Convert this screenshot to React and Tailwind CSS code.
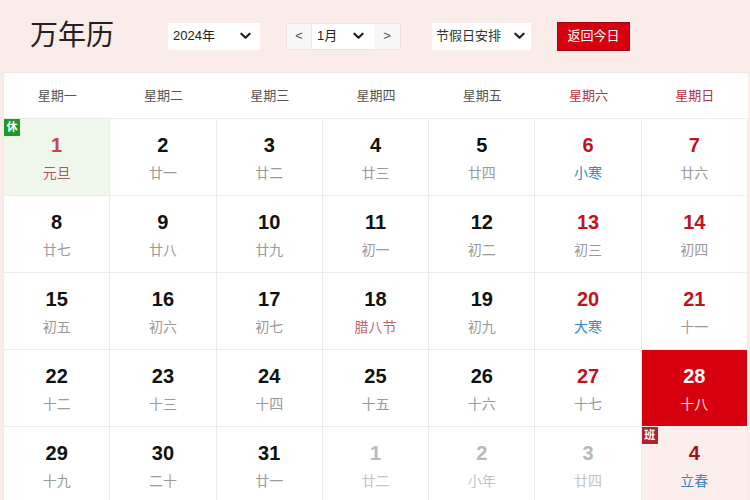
import React from "react";

const CJK = { fontFamily: '"Liberation Sans", "Noto Sans CJK SC", sans-serif' };

function Chev({ className = "" }) {
  return (
    <svg viewBox="0 0 12 8" className={className} width="11" height="8">
      <path d="M1.5 1.5 L6 6 L10.5 1.5" fill="none" stroke="#222" strokeWidth="2.4" strokeLinecap="round" strokeLinejoin="round" />
    </svg>
  );
}

const weekdays = ["星期一", "星期二", "星期三", "星期四", "星期五", "星期六", "星期日"];

const days = [
  { d: "1", l: "元旦", kind: "holiday" },
  { d: "2", l: "廿一" },
  { d: "3", l: "廿二" },
  { d: "4", l: "廿三" },
  { d: "5", l: "廿四" },
  { d: "6", l: "小寒", term: true },
  { d: "7", l: "廿六" },
  { d: "8", l: "廿七" },
  { d: "9", l: "廿八" },
  { d: "10", l: "廿九" },
  { d: "11", l: "初一" },
  { d: "12", l: "初二" },
  { d: "13", l: "初三" },
  { d: "14", l: "初四" },
  { d: "15", l: "初五" },
  { d: "16", l: "初六" },
  { d: "17", l: "初七" },
  { d: "18", l: "腊八节", fest: true },
  { d: "19", l: "初九" },
  { d: "20", l: "大寒", term: true },
  { d: "21", l: "十一" },
  { d: "22", l: "十二" },
  { d: "23", l: "十三" },
  { d: "24", l: "十四" },
  { d: "25", l: "十五" },
  { d: "26", l: "十六" },
  { d: "27", l: "十七" },
  { d: "28", l: "十八", kind: "today" },
  { d: "29", l: "十九" },
  { d: "30", l: "二十" },
  { d: "31", l: "廿一" },
  { d: "1", l: "廿二", other: true },
  { d: "2", l: "小年", other: true },
  { d: "3", l: "廿四", other: true },
  { d: "4", l: "立春", kind: "work", term: true },
];

function Cell({ item, col }) {
  const weekend = col >= 5;
  let bg = "bg-white";
  let numColor = weekend ? "text-[#c0131d]" : "text-[#111]";
  let lunarColor = "text-[#9a9a9a]";
  if (item.other) {
    numColor = "text-[#b9b9b9]";
    lunarColor = "text-[#c4c4c4]";
  }
  if (item.term) lunarColor = "text-[#3a88c0]";
  if (item.fest) lunarColor = "text-[#c4646c]";
  if (item.kind === "holiday") {
    bg = "bg-[#eff8ea]";
    numColor = "text-[#c4474e]";
    lunarColor = "text-[#b0585a]";
  }
  if (item.kind === "today") {
    bg = "bg-[#d7000f]";
    numColor = "text-white";
    lunarColor = "text-[#fbe1e1]";
  }
  if (item.kind === "work") {
    bg = "bg-[#fbeeec]";
    numColor = "text-[#a3121b]";
  }
  return (
    <div className={`relative h-[77px] border-r border-b border-[#ececec] ${bg} flex flex-col items-center`}>
      {item.kind === "holiday" && (
        <div className="absolute left-0 top-0 w-[16px] h-[17px] bg-[#1c9a22] text-white text-[11px] leading-[17px] text-center font-bold" style={CJK}>休</div>
      )}
      {item.kind === "work" && (
        <div className="absolute left-0 top-0 w-[16px] h-[17px] bg-[#b3222a] text-white text-[11px] leading-[17px] text-center font-bold" style={CJK}>班</div>
      )}
      <div className={`mt-[14px] text-[20px] leading-[24px] font-bold ${numColor}`} style={{ fontFamily: '"Liberation Sans", Arial, sans-serif' }}>
        {item.d}
      </div>
      <div className={`mt-[7px] text-[14px] leading-[18px] ${lunarColor}`} style={CJK}>
        {item.l}
      </div>
    </div>
  );
}

export default function App() {
  return (
    <div className="w-[750px] h-[500px] overflow-hidden bg-[#f9ece9]" style={CJK}>
      <div className="h-[72px] flex items-center">
        <div className="ml-[30px] text-[28px] leading-[32px] text-[#222]" style={CJK}>万年历</div>
        <div className="ml-[54px] w-[92px] h-[27px] bg-white flex items-center justify-between pl-[5px] pr-[9px] text-[13px] text-[#222]">
          <span>2024年</span>
          <Chev />
        </div>
        <div className="ml-[26px] h-[27px] flex items-stretch border border-[#ece4e2] bg-white text-[13px] text-[#222]">
          <div className="w-[25px] bg-[#f7f7f7] flex items-center justify-center text-[#555] border-r border-[#ebe6e5]">&lt;</div>
          <div className="w-[62px] flex items-center justify-between pl-[5px] pr-[10px]">
            <span>1月</span>
            <Chev />
          </div>
          <div className="w-[26px] bg-[#f7f7f7] flex items-center justify-center text-[#555]">&gt;</div>
        </div>
        <div className="ml-[31px] w-[99px] h-[27px] bg-white flex items-center justify-between pl-[4px] pr-[6px] text-[13px] text-[#333]">
          <span>节假日安排</span>
          <Chev />
        </div>
        <div className="ml-[26px] w-[73px] h-[29px] bg-[#d7000f] border border-[#9e0a10] flex items-center justify-center text-[13px] text-white">
          返回今日
        </div>
      </div>
      <div className="ml-[3px] w-[745px] bg-white border-l border-[#ececec]">
        <div className="grid grid-cols-7 h-[47px] border-b border-[#ececec] border-t border-t-[#f2e6e4]">
          {weekdays.map((w, i) => (
            <div key={w} className={`flex items-center justify-center text-[13px] ${i >= 5 ? "text-[#b5353c]" : "text-[#555]"}`} style={CJK}>
              {w}
            </div>
          ))}
        </div>
        <div className="grid grid-cols-7">
          {days.map((item, i) => (
            <Cell key={i} item={item} col={i % 7} />
          ))}
        </div>
      </div>
    </div>
  );
}
